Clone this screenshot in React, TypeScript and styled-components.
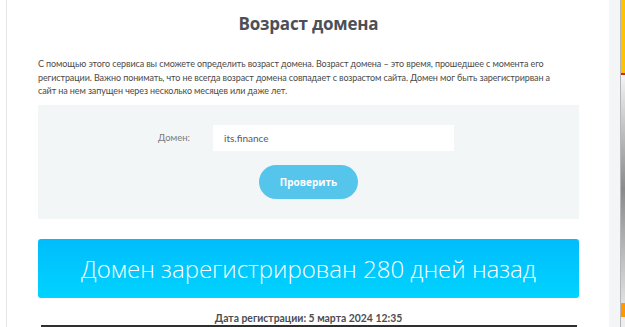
import styled, { createGlobalStyle } from "styled-components";

const GlobalStyle = createGlobalStyle`
    html, body {
        margin: 0;
        padding: 0;
        background: #ffffff;
        font-family: Lato, "Open Sans", sans-serif;
    }
`

const Shell = styled.div`
    display: flex;
    height: 327px;
    overflow: hidden;
`

const Page = styled.main`
    flex: 1;
    margin-left: 6px;
    border-left: 1px solid #e4e6e8;
    padding: 0 30px 0 31px;
    display: flex;
    flex-direction: column;
    & > * {
        flex-shrink: 0;
    }
`

const Title = styled.h1`
    margin: 12px 0 0;
    font-family: "Open Sans", sans-serif;
    font-size: 17px;
    letter-spacing: -0.2px;
    line-height: 24px;
    font-weight: 700;
    color: #4b5058;
    text-align: center;
`

const Intro = styled.p`
    margin: 21px 0 0;
    font-size: 9px;
    letter-spacing: -0.1px;
    line-height: 13.5px;
    color: #4a4a4a;
`

const IntroLine = styled.span`
    display: block;
    white-space: nowrap;
`

const CheckBox = styled.section`
    margin-top: 7px;
    background: #f3f6f7;
    padding: 20px 0;
    display: flex;
    flex-direction: column;
    align-items: center;
    gap: 14px;
`

const FormRow = styled.div`
    align-self: stretch;
    display: grid;
    grid-template-columns: 152px 241px;
    column-gap: 23px;
    align-items: center;
`

const Label = styled.label`
    text-align: right;
    font-size: 9.5px;
    color: #7a7a7a;
`

const Input = styled.div`
    height: 26px;
    background: #ffffff;
    display: flex;
    align-items: center;
    padding-left: 11px;
    font-size: 10px;
    color: #555a60;
`

const CheckButton = styled.button`
    width: 99px;
    height: 34px;
    border: none;
    border-radius: 17px;
    background: #56c5ec;
    color: #ffffff;
    font-family: "Open Sans", sans-serif;
    font-weight: 700;
    font-size: 10px;
`

const Banner = styled.div`
    margin-top: 20px;
    height: 59px;
    border-radius: 3px;
    background: linear-gradient(#00bcfc, #00d4ff);
    display: flex;
    align-items: center;
    justify-content: center;
    color: #ffffff;
    font-family: "Open Sans", sans-serif;
    font-weight: 300;
    font-size: 24px;
`

const RegDate = styled.div`
    margin-top: 14px;
    text-align: center;
    font-size: 10.4px;
    line-height: 13px;
    font-weight: 700;
    color: #4a4d52;
`

const Preview = styled.div`
    margin: 0 2px 0 3px;
    height: 40px;
    border-top: 2px solid #2e2f31;
    background: #f2f2f2;
`

const Gutter = styled.div`
    width: 11px;
    background: #f4f5f7;
    border-right: 1px solid #b4b6b8;
`

const SideAd = styled.aside`
    width: 4px;
    display: flex;
    flex-direction: column;
`

const AdPart = styled.div<{ $h: number; $bg: string }>`
    height: ${p => p.$h}px;
    background: ${p => p.$bg};
`

const introLines = [
    "С помощью этого сервиса вы сможете определить возраст домена. Возраст домена – это время, прошедшее с момента его",
    "регистрации. Важно понимать, что не всегда возраст домена совпадает с возрастом сайта. Домен мог быть зарегистрирван а",
    "сайт на нем запущен через несколько месяцев или даже лет.",
]

export default function App() {
    return (
        <Shell>
            <GlobalStyle />
            <Page>
                <Title>Возраст домена</Title>
                <Intro>
                    {introLines.map(line => <IntroLine key={line}>{line}</IntroLine>)}
                </Intro>
                <CheckBox>
                    <FormRow>
                        <Label>Домен:</Label>
                        <Input>its.finance</Input>
                    </FormRow>
                    <CheckButton>Проверить</CheckButton>
                </CheckBox>
                <Banner>Домен зарегистрирован 280 дней назад</Banner>
                <RegDate>Дата регистрации: 5 марта 2024 12:35</RegDate>
                <Preview />
            </Page>
            <Gutter />
            <SideAd>
                <AdPart $h={73} $bg="#fdc200" />
                <AdPart $h={2} $bg="#d2232a" />
                <AdPart $h={228} $bg="linear-gradient(#f4f4f4, #8a8a8a 50%, #e0e0e0)" />
                <AdPart $h={14} $bg="#ff9800" />
                <AdPart $h={10} $bg="#eeeeee" />
            </SideAd>
        </Shell>
    )
}
